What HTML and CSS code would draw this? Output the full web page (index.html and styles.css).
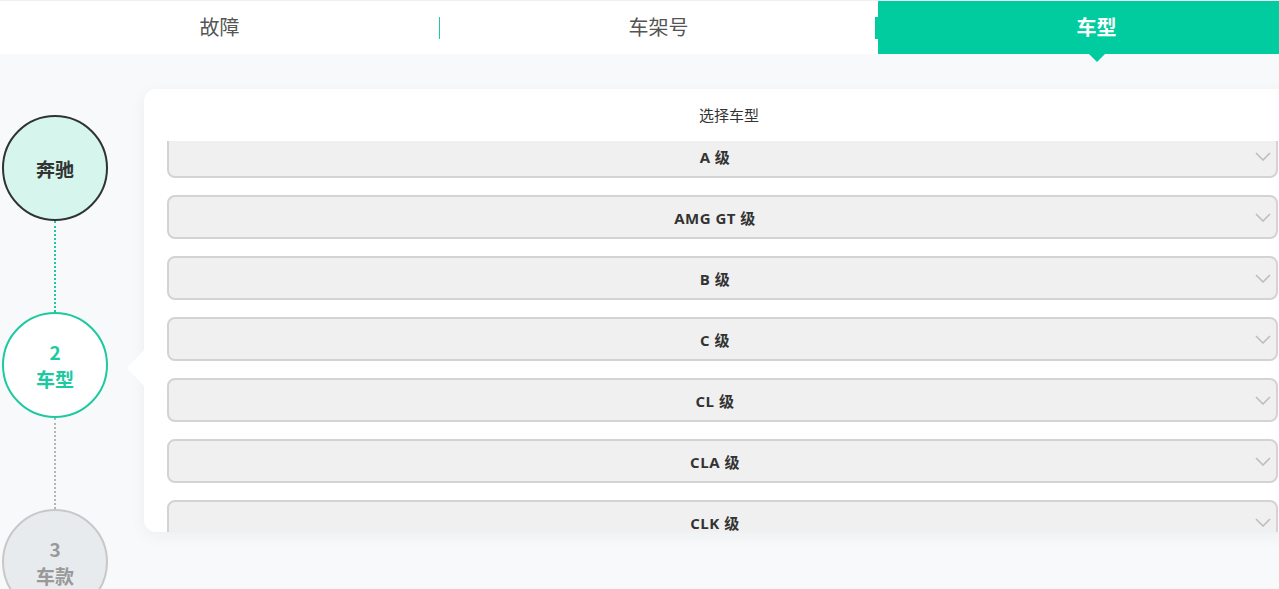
FILE: index.html
```html
<!DOCTYPE html>
<html lang="zh">
<head>
<meta charset="utf-8">
<title>选择车型</title>
<link rel="stylesheet" href="styles.css">
</head>
<body>
<div class="page">
  <nav class="tabs">
    <div class="tab sep">故障</div>
    <div class="tab sep sep-green">车架号</div>
    <div class="tab active">车型</div>
  </nav>
  <main class="main">
    <div class="steps">
      <div class="step done"><span>奔驰</span></div>
      <div class="line line-green"></div>
      <div class="step current"><span>2</span><span>车型</span></div>
      <div class="line line-grey"></div>
      <div class="step todo"><span>3</span><span>车款</span></div>
    </div>
    <section class="panel">
      <div class="notch"></div>
      <div class="panel-title">选择车型</div>
      <div class="list-clip">
        <ul class="list">
          <li class="item"><span class="label">A 级</span><svg class="chev" viewBox="0 0 16 9"><polyline points="1,1 8,8 15,1"/></svg></li>
          <li class="item"><span class="label">AMG GT 级</span><svg class="chev" viewBox="0 0 16 9"><polyline points="1,1 8,8 15,1"/></svg></li>
          <li class="item"><span class="label">B 级</span><svg class="chev" viewBox="0 0 16 9"><polyline points="1,1 8,8 15,1"/></svg></li>
          <li class="item"><span class="label">C 级</span><svg class="chev" viewBox="0 0 16 9"><polyline points="1,1 8,8 15,1"/></svg></li>
          <li class="item"><span class="label">CL 级</span><svg class="chev" viewBox="0 0 16 9"><polyline points="1,1 8,8 15,1"/></svg></li>
          <li class="item"><span class="label">CLA 级</span><svg class="chev" viewBox="0 0 16 9"><polyline points="1,1 8,8 15,1"/></svg></li>
          <li class="item"><span class="label">CLK 级</span><svg class="chev" viewBox="0 0 16 9"><polyline points="1,1 8,8 15,1"/></svg></li>
          <li class="item"><span class="label">CLS 级</span><svg class="chev" viewBox="0 0 16 9"><polyline points="1,1 8,8 15,1"/></svg></li>
        </ul>
      </div>
    </section>
  </main>
</div>
</body>
</html>
```

FILE: styles.css
```css
html, body {
  margin: 0;
  padding: 0;
  overflow: hidden;
  background: #f7f9fa;
  font-family: "Open Sans", "Noto Sans CJK SC", sans-serif;
  color: #333;
}

.page {
  width: 1315px;
  height: 589px;
}

.tabs {
  display: flex;
  height: 54px;
  background: #fff;
  border-top: 1px solid #eef0f2;
  box-sizing: border-box;
}

.tab {
  flex: 0 0 439px;
  display: flex;
  align-items: center;
  justify-content: center;
  padding-bottom: 3px;
  font-family: "Noto Sans CJK SC", sans-serif;
  font-size: 20px;
  color: #555;
  position: relative;
}

.tab.sep::after {
  content: "";
  position: absolute;
  right: -1px;
  top: 16px;
  width: 1px;
  height: 22px;
  background: #1ec9a0;
  z-index: 1;
}

.tab.sep-green::after {
  width: 3px;
  right: 0;
  background: #00cc9f;
}

.tab.active {
  flex: 1 1 auto;
  background: #00cc9f;
  color: #fff;
  font-weight: 700;
}

.tab.active::after {
  content: "";
  position: absolute;
  left: 50%;
  bottom: -8px;
  margin-left: -8px;
  border-left: 8px solid transparent;
  border-right: 8px solid transparent;
  border-top: 8px solid #00cc9f;
}

.main {
  display: flex;
  align-items: flex-start;
  padding-top: 35px;
}

.steps {
  display: flex;
  flex-direction: column;
  align-items: center;
  width: 106px;
  margin-left: 2px;
  margin-top: 26px;
}

.step {
  width: 106px;
  height: 106px;
  box-sizing: border-box;
  border-radius: 50%;
  border: 2px solid #333;
  display: flex;
  flex-direction: column;
  align-items: center;
  justify-content: center;
  font-family: "Noto Sans CJK SC", sans-serif;
  font-size: 19px;
  font-weight: 700;
  line-height: 27px;
}

.step.done {
  background: #d5f5ed;
  border-color: #2f3333;
  color: #333;
}

.step.current {
  background: #fff;
  border-color: #1dc9a0;
  color: #1dc9a0;
}

.step.todo {
  background: #e8ebee;
  border-color: #c8c8c8;
  color: #999;
}

.line {
  width: 0;
  height: 91px;
}

.line-green {
  border-left: 2px dotted #1dc9a0;
}

.line-grey {
  border-left: 2px dotted #b5b5b5;
}

.panel {
  position: relative;
  margin-left: 36px;
  width: 1170px;
  height: 443px;
  background: #fff;
  border-radius: 12px;
  box-shadow: 0 4px 16px rgba(40, 60, 80, 0.05);
  display: flex;
  flex-direction: column;
}

.notch {
  position: absolute;
  left: -17px;
  top: 261px;
  width: 0;
  height: 0;
  border-top: 18px solid transparent;
  border-bottom: 18px solid transparent;
  border-right: 17px solid #fff;
}

.panel-title {
  height: 52px;
  line-height: 52px;
  text-align: center;
  font-family: "Noto Sans CJK SC", sans-serif;
  font-size: 15px;
  color: #333;
}

.list-clip {
  flex: 1;
  overflow: hidden;
  padding: 0 36px 0 23px;
  border-radius: 0 0 12px 12px;
}

.list {
  list-style: none;
  margin: -7px 0 0;
  padding: 0;
  display: flex;
  flex-direction: column;
  gap: 17px;
}

.item {
  height: 44px;
  box-sizing: border-box;
  border: 2px solid #d3d3d3;
  border-radius: 8px;
  background: #f0f0f0;
  display: flex;
  align-items: center;
  padding-left: 6px;
}

.label {
  flex: 1;
  text-align: center;
  font-size: 15px;
  font-weight: 700;
  letter-spacing: 0.5px;
  color: #333;
}

.chev {
  width: 16px;
  height: 9px;
  margin-right: 5px;
  fill: none;
  stroke: #bdbdbd;
  stroke-width: 1.6;
}
```
